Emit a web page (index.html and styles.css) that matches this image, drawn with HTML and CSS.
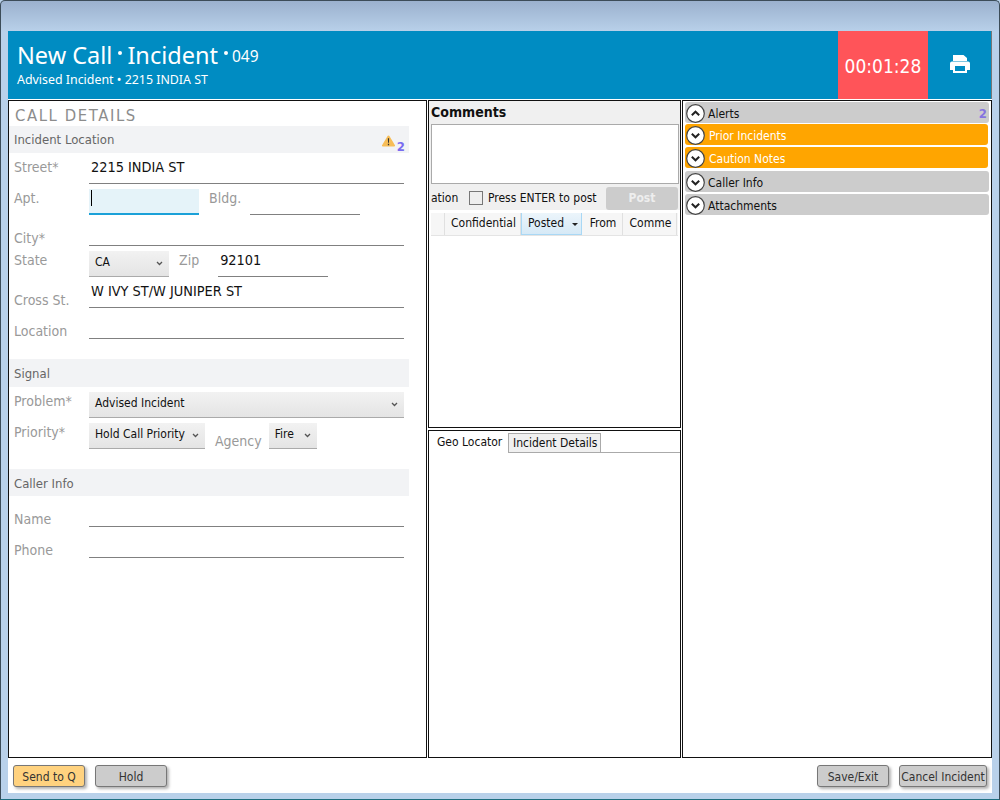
FILE: index.html
```html
<!DOCTYPE html>
<html lang="en">
<head>
    <meta charset="UTF-8">
    <meta name="viewport" content="width=device-width, initial-scale=1.0">
    <title>New Call - Incident</title>
    <link rel="stylesheet" href="styles.css">
</head>
<body>
    <div class="window">
        <header class="call-header">
            <div class="call-title">
                <h1>New Call<span class="dot"></span>Incident<span class="dot"></span><small>049</small></h1>
                <p>Advised Incident &bull; 2215 INDIA ST</p>
            </div>
            <div class="timer">00:01:28</div>
            <div class="print">
                <svg width="20" height="18" viewBox="0 0 20 18"><path fill="#fff" d="M3 0h10.500L17 3v3H3zM2 6.500h16a2 2 0 0 1 2 2V15h-3v3H3v-3H0V8.500a2 2 0 0 1 2-2z"/><path fill="#008cc2" d="M5 11h10v5H5z"/></svg>
            </div>
        </header>

        <main class="panels">
            <section class="panel details">
                <h2>CALL DETAILS</h2>

                <div class="bar">Incident Location
                    <span class="bar-alert">
                        <svg width="15" height="12" viewBox="0 0 15 13"><path fill="#f7bd57" d="M7.500 0.500c.5 0 .8.300 1 .7l6 10c.4.700 0 1.300-.8 1.300H1.300c-.8 0-1.200-.6-.8-1.300l6-10c.2-.4.500-.7 1-.7z"/><path fill="#333" d="M6.800 3.500h1.400l-.2 5H7zM6.800 9.500h1.400v1.500H6.800z"/></svg>
                        <b>2</b>
                    </span>
                </div>
                <div class="row">
                    <label>Street*</label>
                    <div class="field wide">2215 INDIA ST</div>
                </div>
                <div class="row">
                    <label>Apt.</label>
                    <div class="field apt"><span class="caret"></span></div>
                    <label class="side bldg">Bldg.</label>
                    <div class="field short"></div>
                </div>
                <div class="row">
                    <label class="low">City*</label>
                    <div class="field wide"></div>
                </div>
                <div class="row">
                    <label>State</label>
                    <div class="select state">CA <svg class="chev" width="7" height="5" viewBox="0 0 7 5"><path d="M1 1l2.500 2.500L6 1" fill="none" stroke="#555" stroke-width="1.300"/></svg></div>
                    <label class="side zip-label">Zip</label>
                    <div class="field short">92101</div>
                </div>
                <div class="row">
                    <label class="low">Cross St.</label>
                    <div class="field wide">W IVY ST/W JUNIPER ST</div>
                </div>
                <div class="row">
                    <label class="low">Location</label>
                    <div class="field wide"></div>
                </div>

                <div class="bar bar-tall">Signal</div>
                <div class="row">
                    <label>Problem*</label>
                    <div class="select problem">Advised Incident <svg class="chev" width="7" height="5" viewBox="0 0 7 5"><path d="M1 1l2.500 2.500L6 1" fill="none" stroke="#555" stroke-width="1.300"/></svg></div>
                </div>
                <div class="row">
                    <label>Priority*</label>
                    <div class="select priority">Hold Call Priority <svg class="chev" width="7" height="5" viewBox="0 0 7 5"><path d="M1 1l2.500 2.500L6 1" fill="none" stroke="#555" stroke-width="1.300"/></svg></div>
                    <label class="side low agency">Agency</label>
                    <div class="select agency-select">Fire <svg class="chev" width="7" height="5" viewBox="0 0 7 5"><path d="M1 1l2.500 2.500L6 1" fill="none" stroke="#555" stroke-width="1.300"/></svg></div>
                </div>

                <div class="bar">Caller Info</div>
                <div class="row">
                    <label class="low">Name</label>
                    <div class="field wide"></div>
                </div>
                <div class="row">
                    <label class="low">Phone</label>
                    <div class="field wide"></div>
                </div>
            </section>

            <div class="middle">
                <section class="panel comments">
                    <div class="comment-box">
                        <h3>Comments</h3>
                        <div class="comment-input"></div>
                        <div class="post-row">
                            <span class="clipped">ation</span>
                            <span class="check"></span>
                            <span class="enter">Press ENTER to post</span>
                            <button type="button" class="post">Post</button>
                        </div>
                    </div>
                    <div class="grid-head">
                        <span class="col col-blank"></span>
                        <span class="col col-conf">Confidential</span>
                        <span class="col col-posted">Posted <i class="sort"></i></span>
                        <span class="col col-from">From</span>
                        <span class="col col-comm">Comme</span>
                    </div>
                </section>
                <section class="panel geo">
                    <div class="tabs">
                        <span class="tab active">Geo Locator</span>
                        <span class="tab">Incident Details</span>
                    </div>
                </section>
            </div>

            <section class="panel side-list">
                <div class="acc">
                    <svg class="acc-icon" width="19" height="19" viewBox="0 0 19 19"><circle cx="9.500" cy="9.500" r="8.800" fill="#fff" stroke="#444" stroke-width="1.200"/><path d="M5.800 11.200l3.700-3.500 3.700 3.500" fill="none" stroke="#222" stroke-width="2"/></svg>
                    Alerts <b class="acc-count">2</b>
                </div>
                <div class="acc warn">
                    <svg class="acc-icon" width="19" height="19" viewBox="0 0 19 19"><circle cx="9.500" cy="9.500" r="8.800" fill="#fff" stroke="#444" stroke-width="1.200"/><path d="M5.800 7.800l3.700 3.500 3.700-3.500" fill="none" stroke="#222" stroke-width="2"/></svg>
                    Prior Incidents
                </div>
                <div class="acc warn">
                    <svg class="acc-icon" width="19" height="19" viewBox="0 0 19 19"><circle cx="9.500" cy="9.500" r="8.800" fill="#fff" stroke="#444" stroke-width="1.200"/><path d="M5.800 7.800l3.700 3.500 3.700-3.500" fill="none" stroke="#222" stroke-width="2"/></svg>
                    Caution Notes
                </div>
                <div class="acc gap">
                    <svg class="acc-icon" width="19" height="19" viewBox="0 0 19 19"><circle cx="9.500" cy="9.500" r="8.800" fill="#fff" stroke="#444" stroke-width="1.200"/><path d="M5.800 7.800l3.700 3.500 3.700-3.500" fill="none" stroke="#222" stroke-width="2"/></svg>
                    Caller Info
                </div>
                <div class="acc">
                    <svg class="acc-icon" width="19" height="19" viewBox="0 0 19 19"><circle cx="9.500" cy="9.500" r="8.800" fill="#fff" stroke="#444" stroke-width="1.200"/><path d="M5.800 7.800l3.700 3.500 3.700-3.500" fill="none" stroke="#222" stroke-width="2"/></svg>
                    Attachments
                </div>
            </section>
        </main>

        <footer class="actions">
            <button type="button" class="btn btn-send">Send to Q</button>
            <button type="button" class="btn">Hold</button>
            <span class="spacer"></span>
            <button type="button" class="btn">Save/Exit</button>
            <button type="button" class="btn btn-cancel">Cancel Incident</button>
        </footer>
    </div>
</body>
</html>
```

FILE: styles.css
```css
* {
    box-sizing: border-box;
}

body {
    margin: 0;
    font-family: "DejaVu Sans Condensed", "DejaVu Sans", sans-serif;
    font-stretch: condensed;
    font-size: 12px;
    color: #111;
    background-color: #b9d1ea;
}

.window {
    width: 1000px;
    height: 800px;
    padding: 30px 7px 6px 7px;
    border: 1px solid #3c4c58;
    border-bottom-color: #1f6f80;
    border-radius: 5px 5px 0 0;
    background: linear-gradient(to bottom, #9bb1ce 0, #b9d1ea 31px);
    overflow: hidden;
    display: flex;
    flex-direction: column;
}

/* header */
.call-header {
    height: 68px;
    flex: none;
    display: flex;
    background-color: #008cc2;
    border-right: 1px solid #777;
    color: #fff;
}

.call-title {
    flex: 1;
    padding: 7px 0 0 9px;
    font-family: "Noto Sans", sans-serif;
    font-stretch: normal;
}

.call-title h1 {
    margin: 0;
    font-size: 23.500px;
    font-weight: 400;
    line-height: 32px;
    display: flex;
    align-items: center;
}

.call-title small {
    font-size: 15.500px;
    margin-top: 2px;
}

.dot {
    width: 4px;
    height: 4px;
    margin: -4px 5px 0 6px;
    border-radius: 50%;
    background-color: #fff;
}

.dot + small {
    margin-left: -1px;
}

.call-title p {
    margin: 0;
    line-height: 16px;
    font-size: 12.400px;
}

.timer {
    width: 90px;
    background-color: #ff5459;
    font-size: 19px;
    line-height: 70px;
    text-align: center;
}

.print {
    width: 63px;
    padding-bottom: 2px;
    display: flex;
    align-items: center;
    justify-content: center;
}

/* panels */
.panels {
    flex: 1;
    display: flex;
    padding-top: 1px;
    gap: 1px;
    background-color: #fff;
}

.panel {
    border: 1px solid #111;
    background-color: #fff;
}

.details {
    width: 419px;
}

.details h2 {
    margin: 0;
    height: 25px;
    padding-left: 6px;
    font-size: 16.500px;
    font-weight: 400;
    line-height: 30px;
    letter-spacing: 1.600px;
    color: #8c8c8c;
}

.bar {
    width: 400px;
    height: 27px;
    padding-left: 5px;
    display: flex;
    align-items: center;
    justify-content: space-between;
    background-color: #f2f3f5;
    font-size: 13px;
    color: #666;
}

.bar-tall {
    height: 28px;
    margin-top: 20px;
}

.row + .bar:not(.bar-tall) {
    margin-top: 20px;
    padding-top: 1px;
}

.bar-alert {
    align-self: flex-start;
    display: flex;
    align-items: flex-start;
    gap: 1px;
    padding: 9px 4px 0 0;
}

.bar-alert b {
    margin-top: 6px;
    font-size: 13px;
    line-height: 12px;
    color: #7a6cf0;
}

.row {
    height: 31px;
    padding-left: 5px;
    display: flex;
}

.row label {
    width: 75px;
    flex: none;
    padding-top: 6px;
    font-size: 14px;
    line-height: 16px;
    color: #999;
}

.row label.low {
    padding-top: 15px;
}

.row label.side {
    width: auto;
}

.field {
    height: 31px;
    padding: 6px 0 0 2px;
    font-size: 14.400px;
    line-height: 16px;
    color: #111;
    border-bottom: 1px solid #808080;
}

.wide {
    width: 315px;
}

.short {
    width: 110px;
}

.apt {
    width: 110px;
    height: 26px;
    margin-top: 5px;
    padding: 1px 0 0 2px;
    background-color: #e5f3f9;
    border-bottom: 2px solid #1ba1d8;
}

.caret {
    display: block;
    width: 1px;
    height: 16px;
    background-color: #000;
}

.row label.bldg {
    width: 31px;
    margin: 0 10px;
}

.zip-label {
    margin: 0 19px 0 10px;
}

.select {
    height: 26px;
    margin-top: 5px;
    padding: 0 6px 4px 6px;
    display: flex;
    align-items: center;
    justify-content: space-between;
    white-space: nowrap;
    background: linear-gradient(to bottom, #f2f2f2, #e4e4e4);
    border-bottom: 1px solid #aaa;
}

.chev {
    margin-top: 4px;
}

.state {
    width: 80px;
}

.problem {
    width: 315px;
}

.priority {
    width: 116px;
}

.agency {
    margin: 0 7px 0 10px;
}

.agency-select {
    width: 48px;
}

/* middle column */
.middle {
    width: 253px;
    display: flex;
    flex-direction: column;
    gap: 2px;
}

.comments {
    height: 328px;
}

.comment-box {
    height: 109px;
    padding: 0 2px;
    background-color: #f0f0f0;
}

.comment-box h3 {
    margin: 0;
    height: 23px;
    font-size: 14px;
    font-weight: 700;
    line-height: 22px;
}

.comment-input {
    height: 60px;
    width: 248px;
    background-color: #fff;
    border: 1px solid #aaa;
}

.post-row {
    height: 26px;
    padding-top: 1px;
    display: flex;
    align-items: center;
}

.clipped {
    width: 38px;
}

.check {
    width: 14px;
    height: 14px;
    margin-right: 5px;
    background-color: #eee;
    border: 1px solid #777;
}

.enter {
    width: 118px;
    white-space: nowrap;
}

.post {
    width: 72px;
    height: 23px;
    margin-top: 1px;
    border: none;
    border-radius: 3px;
    background-color: #ccc;
    color: #eee;
    font-family: inherit;
    font-size: 12px;
    font-weight: 700;
}

.grid-head {
    height: 23px;
    margin: 3px 2px 0;
    display: flex;
    border-bottom: 1px solid #e4e4e4;
    background-color: #f6f6f6;
}

.col {
    height: 22px;
    line-height: 20px;
    text-align: center;
    white-space: nowrap;
    border-right: 1px solid #e0e0e0;
}

.col-blank {
    width: 14px;
}

.col-conf {
    width: 76px;
    padding-left: 2px;
}

.col-posted {
    width: 61px;
    text-align: left;
    padding-left: 6px;
    background: linear-gradient(to bottom, #ecf5fb, #d6e9f6);
    border-left: 1px solid #a9d8f5;
    border-right: 1px solid #a9d8f5;
    border-bottom: 1px solid #a9d8f5;
}

.sort {
    display: inline-block;
    margin: 0 0 1px 5px;
    border: 3px solid transparent;
    border-top: 3px solid #222;
    border-bottom: none;
}

.col-from {
    width: 41px;
    padding-left: 2px;
}

.col-comm {
    width: 54px;
    padding-left: 2px;
}

.geo {
    flex: 1;
}

.tabs {
    height: 21px;
    margin-top: 1px;
    display: flex;
    align-items: flex-end;
    white-space: nowrap;
    border-bottom: 1px solid #aaa;
}

.tab {
    height: 19px;
    padding: 0 3px 0 4px;
    line-height: 19px;
    background-color: #f0f0f0;
    border: 1px solid #aaa;
    border-bottom: none;
}

.tab.active {
    width: 79px;
    height: 20px;
    padding-left: 8px;
    line-height: 18px;
    background-color: #fff;
    border: none;
    border-bottom: 1px solid #fff;
    margin-bottom: -1px;
}

/* accordions */
.side-list {
    flex: 1;
    padding: 1px 2px 0 2px;
}

.acc {
    height: 21px;
    margin-bottom: 1px;
    padding: 2px 2px 0 1px;
    display: flex;
    align-items: center;
    gap: 3px;
    background-color: #ccc;
    border-radius: 3px;
}

.warn {
    margin: 0 1px 2px 0;
    gap: 4px;
    background-color: #ffa500;
    color: #fff;
}

.gap {
    margin-top: 3px;
    margin-bottom: 2px;
}

.acc-icon {
    flex: none;
}

.acc-count {
    margin-left: auto;
    font-size: 13px;
    color: #8674e0;
}

/* footer buttons */
.actions {
    height: 35px;
    flex: none;
    padding: 7px 5px 0 5px;
    display: flex;
    align-items: flex-start;
    gap: 10px;
    background-color: #fff;
}

.spacer {
    flex: 1;
}

.btn {
    width: 72px;
    height: 22px;
    padding: 1px 0 0;
    border: 1px solid #777;
    border-radius: 3px;
    background-color: #ccc;
    box-shadow: 2px 2px 3px rgba(0, 0, 0, 0.3);
    font-family: inherit;
    font-size: 12px;
    white-space: nowrap;
    color: #333;
}

.btn-send {
    background-color: #ffd27f;
}

.btn-cancel {
    width: 88px;
}
```
